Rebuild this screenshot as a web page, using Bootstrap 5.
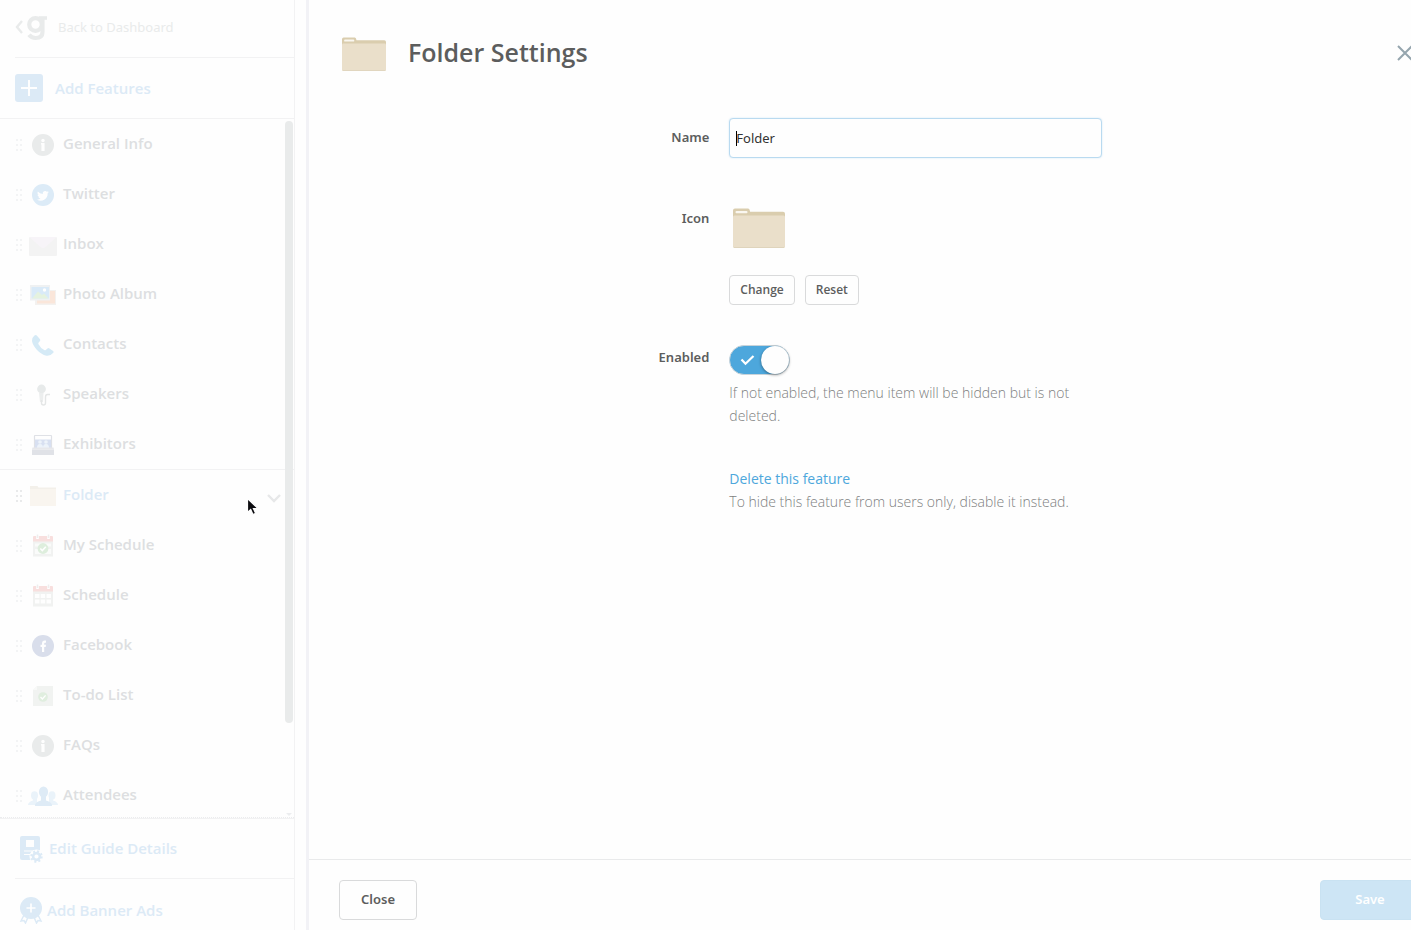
<!DOCTYPE html>
<html lang="en">
<head>
<meta charset="utf-8">
<meta name="viewport" content="width=device-width, initial-scale=1">
<title>Folder Settings</title>
<link href="https://cdn.jsdelivr.net/npm/bootstrap@5.3.0/dist/css/bootstrap.min.css" rel="stylesheet">
<style>
  :root { --line: #f2f2f3; --pale-blue: #dceaf6; --ink: #5c5d5d; --sky: #4da7dc; }
  body { background: #fefefe; color: var(--ink); font-family: "Noto Sans", "Open Sans", sans-serif; font-size: 13px; }
  a { text-decoration: none; }
  svg { display: block; flex: none; }

  /* sidebar */
  .side { width: 295px; border-right: 1px solid var(--line); font-family: "Open Sans", sans-serif; font-size: 15px; font-weight: 600; }
  .side a { color: #dddfe1; }
  .side a.blue { color: var(--pale-blue); }
  .side-row { height: 61px; padding-left: 15px; border-bottom: 1px solid var(--line); }
  .back-row { height: 58px; margin-left: 15px; border-bottom: 1px solid var(--line); }
  .side .back-link { color: #e9ebeb; font-family: "Noto Sans", sans-serif; font-size: 13px; font-weight: 400; }
  .back-link span { padding-bottom: 2px; }
  .features { padding: 0; margin: 0; list-style: none; }
  .features li { height: 50px; padding-left: 15px; gap: 5px; }
  .features li.open { height: 51px; border-top: 1px solid var(--line); }
  .features a { padding-bottom: 2px; }
  .grip-dots { margin-top: 2px; fill: #f3f4f5; }
  .open .grip-dots { fill: #e9eaeb; }
  .chevron { margin: 6px 13px 0 auto; }
  .thumb { top: 2px; right: 1px; bottom: 94px; width: 8px; border-radius: 4px; background: #e9ebeb; }
  .more { right: 1px; bottom: 1px; }
  .dotted { border-bottom: 1px dotted #ebecee; }
  .pointer { left: 246px; top: 27px; }
  .guide-row { height: 60px; margin-left: 15px; padding-left: 4px; border-bottom: 1px solid var(--line); }
  .side-end { border-top: 1px solid var(--line); }
  .ads-row { height: 51px; padding: 17px 0 0 19px; }

  /* settings panel, which runs a little past the window's right edge */
  .sheet { margin-left: 11px; margin-right: -39px; border-left: 3px solid #f2f2f6; }
  .sheet-head { padding: 35px 36px 0 30px; }
  .sheet-head h1 { margin: 0 0 0 22px; padding-bottom: 2px; font-family: "Open Sans", sans-serif; font-size: 25px; font-weight: 600; line-height: 32px; }
  .head-icon { margin: 2px 0 0 3px; }
  .plain-btn { border: 0; padding: 0; background: none; }
  .fields { padding: 47px 0 0 30px; }
  .fields .lab { padding-top: 3px; font-weight: 600; text-align: right; }
  .field-col { width: 373px; max-width: 100%; margin-left: 20px; }
  .name-row .lab { padding: 0; }
  .icon-row { margin-top: 48px; }
  .enabled-row { margin-top: 40px; }
  .icon-actions { margin-top: 27px; gap: 10px; }
  .folder-icon { margin: 2px 0 0 4px; }
  .name-box { height: 40px; padding: 0 6px; border: 1px solid #b9daf0; border-radius: 4px; box-shadow: 0 0 2px #cfe6f5; background: #fefefe; color: #333; font-size: 13px; caret-color: transparent; }
  .name-box:focus { border-color: #b9daf0; box-shadow: 0 0 2px #cfe6f5; background: #fefefe; color: #333; }
  .caret { left: 7px; top: 13px; width: 1px; height: 15px; background: #000; pointer-events: none; }
  .line-btn { --bs-btn-color: var(--ink); --bs-btn-border-color: #d9dadb; --bs-btn-font-weight: 600; --bs-btn-border-radius: 4px; --bs-btn-hover-color: var(--ink); --bs-btn-hover-bg: #f5f6f6; --bs-btn-hover-border-color: #d9dadb; }
  .small-btn { height: 30px; padding: 0 10px; font-family: "Open Sans", sans-serif; font-size: 12px; }
  .wide-btn { height: 40px; padding: 0 21px; font-size: 13px; }
  .save-btn { width: 100px; border: 1px solid #c9e2f2; border-radius: 4px; background: #cde5f5; color: #fff; font-weight: 600; }
  .switch-wrap { width: 61px; height: 30px; }
  .switch-box { appearance: none; display: block; width: 61px; height: 30px; margin: 0; border: 1px solid #c9d3d9; border-radius: 15px; background: #dfe3e5; }
  .switch-box:checked { background: var(--sky); }
  .switch-box::before { content: ""; display: block; width: 28px; height: 28px; border-radius: 50%; background: #fefefe; box-shadow: 0 1px 3px rgba(0,0,0,.4); }
  .switch-box:checked::before { margin-left: 31px; }
  .switch-mark { left: 11px; top: 9px; pointer-events: none; }
  .note { color: #7d7e7e; font-family: "Open Sans", sans-serif; font-size: 14px; font-weight: 300; line-height: 23px; }
  .note p { margin: 6px 0 0; }
  .note p + p { margin-top: 40px; }
  .note a { color: var(--sky); font-weight: 400; }
  .sheet-foot { height: 71px; padding: 20px 30px 0; border-top: 1px solid #e9eaeb; }
</style>
</head>
<body>
<svg width="0" height="0" class="position-absolute" aria-hidden="true">
  <symbol id="grip" viewBox="0 0 8 14"><path d="M1 1h2v2H1zM5 1h2v2H5zM1 6h2v2H1zM5 6h2v2H5zM1 11h2v2H1zM5 11h2v2H5z"/></symbol>
  <symbol id="info" viewBox="0 0 30 30"><circle cx="15" cy="16" r="11" fill="#e9ebeb"/><circle cx="15" cy="11.500" r="1.700" fill="#fefefe"/><path d="M13 14h3.600v8h-3.200v-6.500H13z" fill="#fefefe"/></symbol>
  <symbol id="folder" viewBox="0 0 52 40"><path d="M0 2.500q0-2 2-2h13q1.500 0 1.800 2l.3 1.200H50q2 0 2 2V38q0 2-2 2H2q-2 0-2-2z" fill="#dacdae"/><path d="M0 9q0-1.500 1.500-1.500h49Q52 7.500 52 9v29q0 2-2 2H2q-2 0-2-2z" fill="#eadfca"/><rect x="2.500" y="3" width="12" height="2.200" rx="1" fill="#faf7f0"/><path d="M1 39.500h50" stroke="#dfd4bc"/></symbol>
  <symbol id="calendar" viewBox="0 0 30 30"><path d="M5 11h20v15.500H5z" fill="#f1f2f1"/><path d="M5 7q0-1 1-1h18q1 0 1 1v4.500H5z" fill="#f8dfde"/><path d="M9.500 4v5M20.500 4v5" stroke="#fefefe" stroke-width="2.600"/><path d="M9.500 4.500v3.500M20.500 4.500v3.500" stroke="#eeeeee" stroke-width="1.500"/></symbol>
</svg>

<div class="d-flex vh-100 overflow-hidden">
  <aside class="side d-flex flex-column flex-shrink-0">
    <div class="back-row d-flex align-items-center flex-shrink-0">
      <a href="#" class="back-link d-flex align-items-center">
        <svg width="43" height="30" viewBox="0 0 43 30" fill="none" stroke="#e9ebeb"><path d="M7 7L2 13l5 6" stroke-width="2.400"/><circle cx="20.500" cy="10.500" r="6.300" stroke-width="4.200"/><path d="M24 4h8" stroke-width="3.600"/><path d="M27.500 4v14q0 6-7 6-4 0-6.500-3.200" stroke-width="4.200"/></svg>
        <span>Back to Dashboard</span>
      </a>
    </div>
    <div class="side-row d-flex align-items-center flex-shrink-0">
      <a href="#" class="blue d-flex align-items-center">
        <svg width="28" height="28" viewBox="0 0 28 28"><rect width="28" height="28" rx="3" fill="#dceaf6"/><path d="M14 6v16M6 14h16" stroke="#fefefe" stroke-width="2"/></svg>
        <span class="ms-2 ps-1">Add Features</span>
      </a>
    </div>
    <div class="position-relative flex-fill overflow-hidden dotted">
      <ul class="features">
        <li class="d-flex align-items-center"><svg class="grip-dots" width="8" height="14"><use href="#grip"/></svg><svg width="30" height="30"><use href="#info"/></svg><a href="#">General Info</a></li>
        <li class="d-flex align-items-center"><svg class="grip-dots" width="8" height="14"><use href="#grip"/></svg><svg width="30" height="30" viewBox="0 0 30 30"><circle cx="15" cy="16" r="11" fill="#dcebf7"/><path transform="translate(9 10.500) scale(.74)" d="M16 3.540a6.600 6.600 0 0 1-1.900.500 3.300 3.300 0 0 0 1.400-1.800 6.600 6.600 0 0 1-2.100.800 3.300 3.300 0 0 0-5.600 3A9.300 9.300 0 0 1 1.100 2.600a3.300 3.300 0 0 0 1 4.400 3.300 3.300 0 0 1-1.500-.400 3.300 3.300 0 0 0 2.600 3.200 3.300 3.300 0 0 1-1.500.100 3.300 3.300 0 0 0 3.100 2.300A6.600 6.600 0 0 1 0 13.500a9.300 9.300 0 0 0 14.400-8.300A6.700 6.700 0 0 0 16 3.540z" fill="#fefefe"/></svg><a href="#">Twitter</a></li>
        <li class="d-flex align-items-center"><svg class="grip-dots" width="8" height="14"><use href="#grip"/></svg><svg width="30" height="30" viewBox="0 0 30 30"><rect x="1" y="8" width="28" height="19" rx="1" fill="#f3f3f3"/><path d="M1.500 8h27L17 18.500q-2 1.500-4 0z" fill="#f7f4f8"/></svg><a href="#">Inbox</a></li>
        <li class="d-flex align-items-center"><svg class="grip-dots" width="8" height="14"><use href="#grip"/></svg><svg width="30" height="30" viewBox="0 0 30 30"><path d="M7 11h21v15H7z" fill="#f3f1ef"/><path d="M9 12h18v12.500H9z" fill="#fae6da"/><path d="M2 6h20v15.500H2z" fill="#eff1f2"/><path d="M3.500 8H21v11.500H3.500z" fill="#d9eaf8"/><path d="M4 19.500l6-7 4 3.500 2-1.500 4.500 5z" fill="#e5f2df"/><circle cx="16.500" cy="11" r="1.700" fill="#fefefe"/></svg><a href="#">Photo Album</a></li>
        <li class="d-flex align-items-center"><svg class="grip-dots" width="8" height="14"><use href="#grip"/></svg><svg width="30" height="30" viewBox="0 0 30 30"><path d="M6.500 6.500q1.500-1 2.500.2l3 3.600q.8 1-.2 2l-1.300 1.500q-.5.700 0 1.500 2 3.700 5.700 5.800.8.400 1.500-.2l1.800-1.500q.9-.6 1.900.1l3.700 2.400q1 .8.200 1.900-3 3.500-6.800 3-5.500-1.300-9.700-6T4 12q-.2-3.500 2.500-5.500z" fill="#d5eaf6"/></svg><a href="#">Contacts</a></li>
        <li class="d-flex align-items-center"><svg class="grip-dots" width="8" height="14"><use href="#grip"/></svg><svg width="30" height="30" viewBox="0 0 30 30"><circle cx="13.500" cy="10" r="4.400" fill="#e7eaea"/><path d="M11 14h4.500l-.5 9h-3z" fill="#eceeee"/><path d="M13.500 21v3q0 2 2 2t2-2v-6q0-2.500 2-2.500h2.500" fill="none" stroke="#e4e6e6" stroke-width="1.400"/></svg><a href="#">Speakers</a></li>
        <li class="d-flex align-items-center"><svg class="grip-dots" width="8" height="14"><use href="#grip"/></svg><svg width="30" height="30" viewBox="0 0 30 30"><path d="M6.500 20V7q0-.5.500-.5h16q.5 0 .5.500v13" fill="none" stroke="#dfe1e6" stroke-width="1.200"/><path d="M7 10.500h16V19H7z" fill="#d8e0f1"/><g fill="#edf3fa"><circle cx="12" cy="13" r="1.800"/><circle cx="18" cy="13" r="1.800"/><path d="M9 19q0-4 3-4t3 4zM15 19q0-4 3-4t3 4z"/></g><path d="M4.500 18.500h21l.5 2H4z" fill="#e7e8eb"/><path d="M4 20.500h22V26H4z" fill="#e0e2e7"/></svg><a href="#">Exhibitors</a></li>
        <li class="open position-relative d-flex align-items-center"><svg class="grip-dots" width="8" height="14"><use href="#grip"/></svg><svg width="30" height="30" viewBox="0 0 30 30"><path d="M2 6h7.500l1 1.500H28V26H2z" fill="#f3f0ea"/><path d="M2 9h26v17H2z" fill="#f9f5ef"/></svg><a href="#" class="blue">Folder</a>
          <svg class="chevron" width="14" height="10" viewBox="0 0 14 10"><path d="M1 2l6 6 6-6" fill="none" stroke="#e7e8e9" stroke-width="2.400"/></svg>
          <svg class="pointer position-absolute" width="14" height="21" viewBox="0 0 14 21"><path d="M1.500 1.500v14l3.200-3 2.300 5 2.600-1.200-2.200-4.800H12z" fill="#0c0c10" stroke="#fefefe" stroke-width="1.200"/></svg>
        </li>
        <li class="d-flex align-items-center"><svg class="grip-dots" width="8" height="14"><use href="#grip"/></svg><svg width="30" height="30" viewBox="0 0 30 30"><use href="#calendar"/><path d="M7 13.500h16v3H7zM7 19h16v5H7z" fill="#fafbfa"/><circle cx="15" cy="18.500" r="5.400" fill="#deeedd"/><path d="M12.300 18.500l2 2 3.500-3.700" fill="none" stroke="#fefefe" stroke-width="1.600"/></svg><a href="#">My Schedule</a></li>
        <li class="d-flex align-items-center"><svg class="grip-dots" width="8" height="14"><use href="#grip"/></svg><svg width="30" height="30" viewBox="0 0 30 30"><use href="#calendar"/><path d="M7 14h4.500v4H7zM12.700 14h4.500v4h-4.500zM18.500 14H23v4h-4.500zM7 19.500h4.500v4H7zM12.700 19.500h4.500v4h-4.500zM18.500 19.500H23v4h-4.500z" fill="#fefefe"/></svg><a href="#">Schedule</a></li>
        <li class="d-flex align-items-center"><svg class="grip-dots" width="8" height="14"><use href="#grip"/></svg><svg width="30" height="30" viewBox="0 0 30 30"><circle cx="15" cy="16" r="11" fill="#d9deeb"/><path d="M14 22v-5h-1.500v-2.200H14v-1.300q0-3 2.800-3h1.200v2.300h-1q-.8 0-.8.900v1.100H18l-.3 2.200h-1.500v5z" fill="#fefefe"/></svg><a href="#">Facebook</a></li>
        <li class="d-flex align-items-center"><svg class="grip-dots" width="8" height="14"><use href="#grip"/></svg><svg width="30" height="30" viewBox="0 0 30 30"><path d="M9 6h16v20H5V10z" fill="#f1f3f1"/><path d="M9 6v4H5z" fill="#f8f9f8"/><circle cx="15" cy="17" r="4.800" fill="#e0eedf"/><path d="M12.500 17l1.900 1.900 3.200-3.500" fill="none" stroke="#fefefe" stroke-width="1.400"/></svg><a href="#">To-do List</a></li>
        <li class="d-flex align-items-center"><svg class="grip-dots" width="8" height="14"><use href="#grip"/></svg><svg width="30" height="30"><use href="#info"/></svg><a href="#">FAQs</a></li>
        <li class="d-flex align-items-center"><svg class="grip-dots" width="8" height="14"><use href="#grip"/></svg><svg width="30" height="30" viewBox="0 0 30 30"><g fill="#eaf3fa"><ellipse cx="6.500" cy="15.500" rx="3.500" ry="4.200"/><ellipse cx="24" cy="15.500" rx="3.500" ry="4.200"/><path d="M0 25q0-3 5-4.500V18h4v7zM30 25q0-3-5-4.500V18h-4v7z"/></g><ellipse cx="15.500" cy="12" rx="4.600" ry="5.600" fill="#deebf6"/><path d="M7 26q-.5-4 6-5.500V15h5v5.500q6.500 1.500 6 5.500z" fill="#deebf6"/></svg><a href="#">Attendees</a></li>
      </ul>
      <div class="thumb position-absolute"></div>
      <svg class="more position-absolute" width="8" height="3" viewBox="0 0 8 3"><path d="M1 0h6L4 3z" fill="#ecedef"/></svg>
    </div>
    <div class="side-end flex-shrink-0">
      <div class="guide-row d-flex align-items-center">
        <a href="#" class="blue d-flex align-items-center">
          <svg width="26" height="30" viewBox="0 0 26 30"><path d="M3 2h16q2 0 2 2v12l-4 9q0 1 0 1H3q-2 0-2-2V4q0-2 2-2z" fill="#dceaf6"/><path d="M7 6h8v7H7zM5 16.500h13v1H5zM5 20h7v1H5z" fill="#fefefe"/><circle cx="17.500" cy="22.500" r="7" fill="#fefefe"/><circle cx="17.500" cy="22.500" r="3.400" fill="none" stroke="#dceaf6" stroke-width="2.600"/><circle cx="17.500" cy="22.500" r="5.200" fill="none" stroke="#dceaf6" stroke-width="2" stroke-dasharray="2 2.080"/></svg>
          <span class="ms-1">Edit Guide Details</span>
        </a>
      </div>
      <div class="ads-row">
        <a href="#" class="blue d-flex align-items-center">
          <svg width="24" height="28" viewBox="0 0 24 28"><g fill="none" stroke="#dceaf6" stroke-width="1.500"><path d="M5 19l-3 6 3-.5 1.500 2.500L9.500 20M19 19l3 6-3-.5-1.500 2.500L14.500 20"/></g><circle cx="12" cy="12" r="11" fill="#dceaf6"/><path d="M12 7.500v9M7.500 12h9" stroke="#fefefe" stroke-width="1.700"/></svg>
          <span class="ms-1">Add Banner Ads</span>
        </a>
      </div>
    </div>
  </aside>

  <main class="sheet d-flex flex-column flex-fill">
    <header class="sheet-head d-flex align-items-center">
      <svg class="head-icon" width="44" height="34" viewBox="0 0 52 40"><use href="#folder"/></svg>
      <h1>Folder Settings</h1>
      <button type="button" class="plain-btn ms-auto" aria-label="Close settings"><svg width="18" height="18" viewBox="0 0 18 18"><path d="M2 2l14 14M16 2L2 16" stroke="#95a5ae" stroke-width="2"/></svg></button>
    </header>

    <form class="fields flex-fill">
      <div class="name-row row g-0 align-items-center">
        <label class="lab col-4" for="name">Name</label>
        <div class="field-col position-relative"><input class="name-box form-control" id="name" type="text" value="Folder" autofocus><span class="caret position-absolute"></span></div>
      </div>
      <div class="icon-row row g-0">
        <div class="lab col-4">Icon</div>
        <div class="field-col">
          <svg class="folder-icon" width="52" height="40" role="img" aria-label="Folder icon"><use href="#folder"/></svg>
          <div class="icon-actions d-flex">
            <button type="button" class="btn line-btn small-btn">Change</button>
            <button type="button" class="btn line-btn small-btn">Reset</button>
          </div>
        </div>
      </div>
      <div class="enabled-row row g-0">
        <label class="lab col-4" for="enabled">Enabled</label>
        <div class="field-col note">
          <div class="switch-wrap position-relative">
            <input type="checkbox" role="switch" class="switch-box" id="enabled" checked>
            <svg class="switch-mark position-absolute" width="15" height="12" viewBox="0 0 15 12"><path d="M1.500 5.500l4 4.300L13.500 2" fill="none" stroke="#fff" stroke-width="2.200"/></svg>
          </div>
          <p>If not enabled, the menu item will be hidden but is not deleted.</p>
          <p><a href="#">Delete this feature</a><br>To hide this feature from users only, disable it instead.</p>
        </div>
      </div>
    </form>

    <footer class="sheet-foot d-flex align-items-start justify-content-between">
      <button type="button" class="btn line-btn wide-btn">Close</button>
      <button type="submit" class="save-btn wide-btn">Save</button>
    </footer>
  </main>
</div>
<script src="https://cdn.jsdelivr.net/npm/bootstrap@5.3.0/dist/js/bootstrap.bundle.min.js"></script>
</body>
</html>
